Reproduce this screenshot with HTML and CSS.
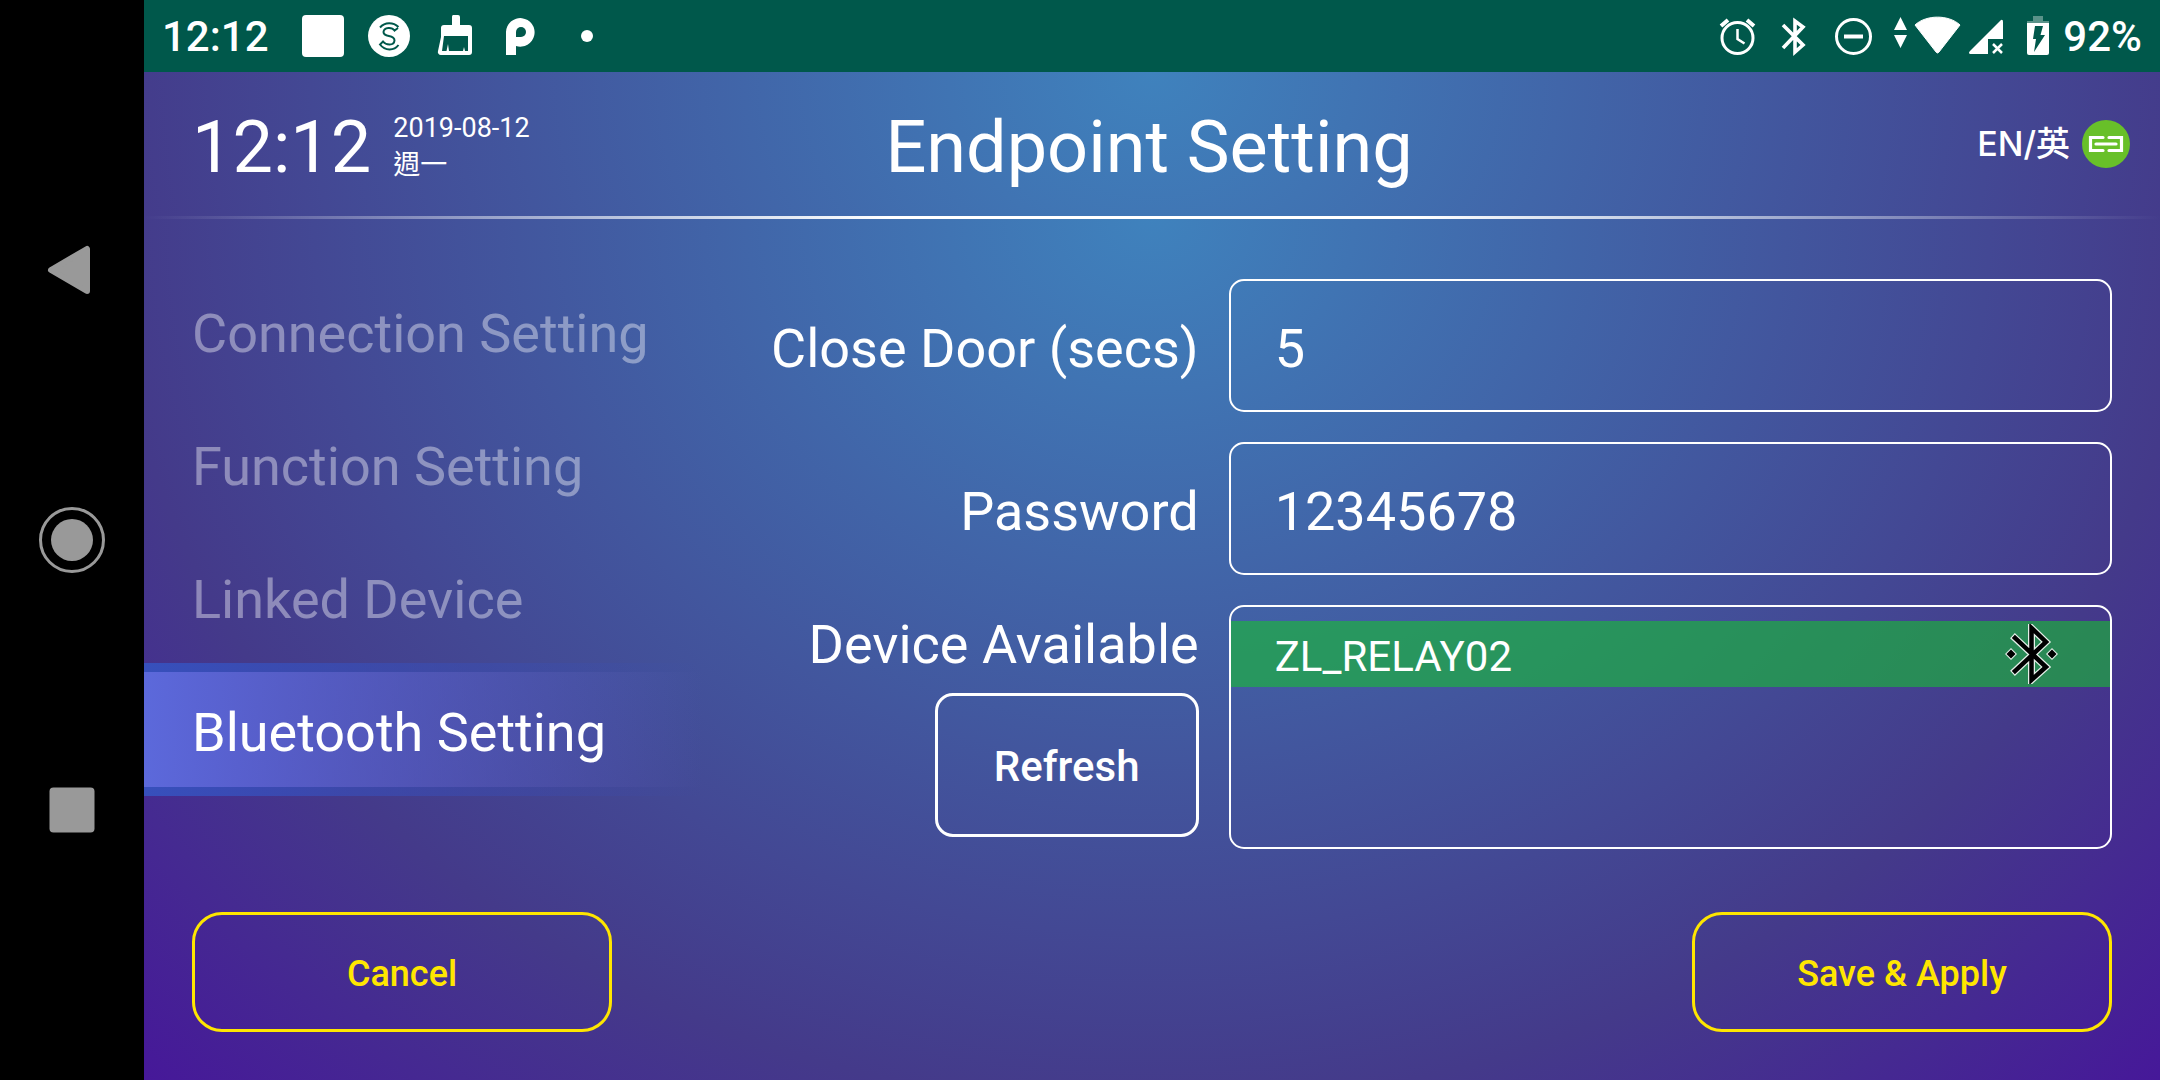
FILE: index.html
```html
<!DOCTYPE html>
<html lang="en">
<head>
<meta charset="utf-8">
<meta name="viewport" content="width=device-width, initial-scale=1">
<title>Endpoint Setting</title>
<link rel="stylesheet" href="styles.css">
</head>
<body>
<div class="device">
  <div class="system-nav">
    <button class="system-key" type="button" aria-label="Back">
      <svg width="72" height="72" viewBox="0 0 72 72"><path d="M15 36 51 15V57Z" fill="#999" stroke="#999" stroke-width="6" stroke-linejoin="round"/></svg>
    </button>
    <button class="system-key" type="button" aria-label="Home">
      <svg width="72" height="72" viewBox="0 0 72 72"><circle cx="36" cy="36" r="31.500" fill="none" stroke="#999" stroke-width="3"/><circle cx="36" cy="36" r="21" fill="#999"/></svg>
    </button>
    <button class="system-key" type="button" aria-label="Recent apps">
      <svg width="72" height="72" viewBox="0 0 72 72"><rect x="13.500" y="13.500" width="45" height="45" rx="4" fill="#999"/></svg>
    </button>
  </div>

  <div class="screen">
    <div class="status-bar">
      <span class="status-time">12:12</span>
      <div class="status-icons">
        <svg width="66" height="72" viewBox="0 0 66 72"><rect x="12" y="15" width="42" height="42" rx="4" fill="#fff"/></svg>
        <svg width="66" height="72" viewBox="0 0 66 72">
          <circle cx="33" cy="36" r="21" fill="#fff"/>
          <g fill="none" stroke="#00584b" stroke-width="2">
            <path d="M24 27.500C29 22 37 22 42.500 27M42 28 38.500 30.500C36 27 28 27 27.500 32 27.500 38 38.500 34 38.500 40.500 38 46 30 45.500 27 41.500L24 44.500C29 51 38 51 42.500 45"/>
          </g>
        </svg>
        <svg width="66" height="72" viewBox="0 0 66 72">
          <path d="M31 15h5a2 2 0 0 1 2 2v8h9a3 3 0 0 1 3 3v24a3 3 0 0 1-3 3H19a3 3 0 0 1-3-4l3-14v-9a3 3 0 0 1 3-3h8v-8a2 2 0 0 1 1-2Z" fill="#fff"/>
          <path d="M22 36H46V51H43L42 47 41 51H27L26 44 24.500 51H20Z" fill="#00584b"/>
        </svg>
        <svg width="66" height="72" viewBox="0 0 66 72">
          <path d="M18 55V32a14.300 14.300 0 1 1 10 14V55Z" fill="#fff"/>
          <path d="M28 37v-5a5 5 0 1 1 5 5Z" fill="#00584b"/>
        </svg>
        <svg width="66" height="72" viewBox="0 0 66 72"><circle cx="33" cy="36" r="6" fill="#fff"/></svg>
      </div>
      <div class="status-icons status-icons-end">
        <svg width="58" height="72" viewBox="0 0 58 72" fill="none" stroke="#fff" stroke-width="3">
          <circle cx="28.500" cy="38" r="15.500"/><path d="M28.500 29v10l7 4.500" stroke-width="2.500"/><path d="M12 26l7-6M45 26l-7-6" stroke-width="4"/>
        </svg>
        <svg width="57" height="72" viewBox="0 0 57 72" fill="none" stroke="#fff" stroke-width="3.600">
          <path d="M16 25 36 45 28 52V21L36 27 16 48"/>
        </svg>
        <svg width="58" height="72" viewBox="0 0 58 72" fill="none" stroke="#fff">
          <circle cx="29.500" cy="36.500" r="17" stroke-width="3"/><path d="M20 36.500H39" stroke-width="4"/>
        </svg>
        <svg width="82" height="72" viewBox="0 0 82 72" fill="#fff">
          <path d="M12 30 18.500 17 25 30ZM12 35H25L18.500 48Z"/>
          <path d="M33 25C44 14.500 67 14.500 78 25L57 52Q55.500 54 54 52Z" stroke="#fff" stroke-linejoin="round"/>
        </svg>
        <svg width="52" height="72" viewBox="0 0 52 72">
          <path d="M37 20Q39 19 39 22V39H24V54H6Q4 53 6 51Z" fill="#fff"/>
          <path d="M29 44 38 53M38 44 29 53" stroke="#fff" stroke-width="2.500"/>
        </svg>
        <svg width="44" height="72" viewBox="0 0 44 72">
          <path d="M17 16H27V21H33V24H11V21H17Z" fill="#fff" opacity=".35"/>
          <path d="M11 23H33V53Q33 55 31 55H13Q11 55 11 53Z" fill="#fff"/>
          <path d="M19 26H27L24.500 35H29L18 52 20 39H17Z" fill="#00584b"/>
        </svg>
      </div>
      <span class="status-battery">92%</span>
    </div>

    <header class="app-header">
      <div class="clock">
        <span class="clock-time">12:12</span>
        <div class="clock-date"><span>2019-08-12</span><span lang="zh-Hant">週一</span></div>
      </div>
      <h1 class="title">Endpoint Setting</h1>
      <div class="header-tools">
        <button class="language" type="button">EN/英</button>
        <svg width="48" height="48" viewBox="0 0 48 48" role="img" aria-label="Linked">
          <circle cx="24" cy="24" r="24" fill="#68c029"/>
          <path d="M21 17.500H8.500V30.500H21M27 17.500H39.500V30.500H27M14 24H34" fill="none" stroke="#fff" stroke-width="3.200" stroke-linecap="round"/>
        </svg>
      </div>
    </header>

    <main class="content">
      <div class="settings">
        <nav class="menu">
          <a class="menu-item" href="#connection">Connection Setting</a>
          <a class="menu-item" href="#function">Function Setting</a>
          <a class="menu-item" href="#linked">Linked Device</a>
          <a class="menu-item menu-item-active" href="#bluetooth" aria-current="page">Bluetooth Setting</a>
        </nav>
        <form class="form" id="bluetooth">
          <label class="label" for="close-door">Close Door (secs)</label>
          <input class="field" id="close-door" type="text" value="5">
          <label class="label" for="password">Password</label>
          <input class="field" id="password" type="text" value="12345678">
          <div class="devices-side">
            <span class="devices-label" id="devices-label">Device Available</span>
            <button class="refresh" type="button">Refresh</button>
          </div>
          <ul class="devices" aria-labelledby="devices-label">
            <li class="device-row">
              <span class="device-name">ZL_RELAY02</span>
              <svg width="54" height="60" viewBox="0 0 54 60">
                <path d="M10 14 41 43 26.500 56V4L41 18 10 47" fill="none" stroke="#e4efe8" stroke-width="7" stroke-linecap="square"/>
                <path d="M6 24 12 30 6 36 0 30ZM47 24 53 30 47 36 41 30Z" fill="#e4efe8"/>
                <path d="M10 14 41 43 26.500 56V4L41 18 10 47" fill="none" stroke="#000" stroke-width="4.500" stroke-linecap="square"/>
                <path d="M6 25.500 10.500 30 6 34.500 1.500 30ZM47 25.500 51.500 30 47 34.500 42.500 30Z" fill="#000"/>
              </svg>
            </li>
          </ul>
        </form>
      </div>
      <div class="actions">
        <button class="action" type="button">Cancel</button>
        <button class="action" type="submit" form="bluetooth">Save &amp; Apply</button>
      </div>
    </main>
  </div>
</div>
</body>
</html>
```

FILE: styles.css
```css
*,
*::before,
*::after {
  box-sizing: border-box;
}

body {
  margin: 0;
  background: #000;
  color: #fff;
  font-family: Roboto, "Noto Sans CJK TC", sans-serif;
  font-size: 54px;
}

button,
input {
  margin: 0;
  padding: 0;
  border: 0;
  background: none;
  color: inherit;
  font: inherit;
}

svg {
  display: block;
  flex: none;
}

.device {
  display: flex;
  min-height: 100vh;
}

/* System keys on the left edge */
.system-nav {
  display: flex;
  flex: 0 0 144px;
  flex-direction: column;
  justify-content: center;
}

.system-key {
  display: flex;
  flex: 0 0 25%;
  align-items: center;
  justify-content: center;
}

.screen {
  display: flex;
  flex: 1;
  flex-direction: column;
  min-width: 0;
}

/* Status bar */
.status-bar {
  display: flex;
  align-items: center;
  height: 72px;
  padding: 0 18px;
  background: #00584b;
  font-size: 42px;
  font-weight: 500;
}

.status-icons {
  display: flex;
  margin-left: 21px;
}

.status-icons-end {
  margin-right: 3px;
  margin-left: auto;
}

/* Header */
.app-header {
  display: grid;
  grid-template-columns: 1fr auto 1fr;
  align-items: center;
  min-height: 144px;
  background: radial-gradient(71% 1222px at 50% 0, #3f82bd 0%, #443a8a 73%, #461899 100%);
}

.clock {
  display: flex;
  align-items: center;
  gap: 22px;
  padding: 6px 0 0 48px;
}

.clock-time,
.title {
  font-size: 72px;
  font-weight: 400;
}

.clock-date {
  display: flex;
  flex-direction: column;
  font-size: 27px;
  line-height: 37px;
}

.title {
  margin: 0;
  padding: 6px 6px 0 0;
}

.header-tools {
  display: flex;
  align-items: center;
  justify-content: flex-end;
  gap: 12px;
  padding-right: 30px;
}

.language {
  font-family: Inter, "Noto Sans CJK TC", sans-serif;
  font-size: 34px;
  font-weight: 500;
  line-height: 48px;
}

/* Content */
.content {
  display: flex;
  flex: 1;
  flex-direction: column;
  justify-content: space-between;
  background: radial-gradient(farthest-corner at 50% 0, #3f82bd 0%, #443a8a 73%, #461899 100%);
}

.content::before {
  height: 3px;
  background: linear-gradient(90deg, rgba(255, 255, 255, 0), #fff 37%, #fff 63%, rgba(255, 255, 255, 0));
  content: "";
}

.settings {
  display: flex;
  flex: 1;
  align-items: flex-start;
}

.menu {
  display: flex;
  flex: 0 0 560px;
  flex-direction: column;
  padding-top: 45px;
}

.menu-item {
  height: 133px;
  padding: 3px 0 0 48px;
  color: rgba(255, 255, 255, 0.4);
  line-height: 133px;
  text-decoration: none;
  white-space: nowrap;
}

.menu-item-active {
  background:
    linear-gradient(90deg, #3750bc, rgba(55, 80, 188, 0)) top / 100% 9px no-repeat,
    linear-gradient(90deg, #3750bc, rgba(55, 80, 188, 0)) bottom / 100% 9px no-repeat,
    linear-gradient(90deg, #5c69db, rgba(76, 92, 200, 0)) center / 100% 115px no-repeat;
  color: #fff;
}

.form {
  display: grid;
  flex: 1;
  grid-template-columns: 14fr 25fr;
  gap: 30px;
  padding: 60px 48px 0 0;
}

.label {
  align-self: center;
  padding-top: 6px;
  text-align: right;
}

.field {
  width: 100%;
  height: 133px;
  padding: 6px 44px 0;
  border: 2px solid #fff;
  border-radius: 15px;
}

.devices-side {
  display: flex;
  flex-direction: column;
  align-items: flex-end;
  gap: 8px;
}

.devices-label {
  line-height: 80px;
}

.refresh {
  width: 264px;
  height: 144px;
  padding-top: 3px;
  border: 3px solid #fff;
  border-radius: 18px;
  font-size: 42px;
  font-weight: 500;
}

.devices {
  min-height: 244px;
  margin: 0;
  padding: 14px 0;
  border: 2px solid #fff;
  border-radius: 15px;
  list-style: none;
}

.device-row {
  display: flex;
  align-items: center;
  justify-content: space-between;
  height: 66px;
  padding: 0 51px 0 44px;
  background: rgba(23, 190, 50, 0.6);
  font-size: 42px;
}

.device-name {
  padding-top: 4px;
}

.actions {
  display: flex;
  justify-content: space-between;
  padding: 48px;
}

.action {
  width: 420px;
  height: 120px;
  padding-top: 3px;
  border: 3px solid #ffe600;
  border-radius: 30px;
  color: #ffe600;
  font-size: 36px;
  font-weight: 500;
}
```
